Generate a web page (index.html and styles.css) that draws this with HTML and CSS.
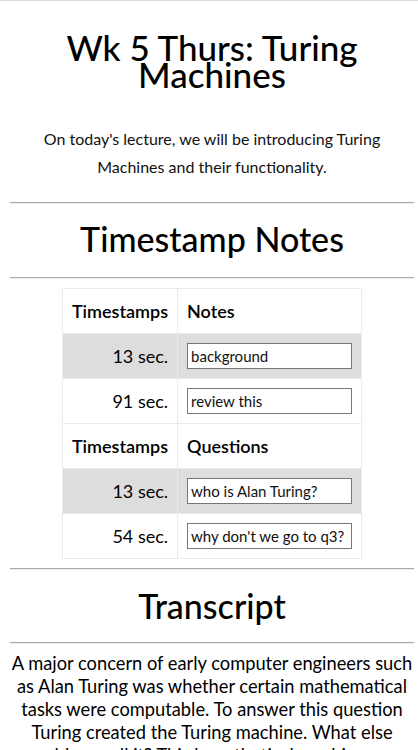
FILE: index.html
```html
<!DOCTYPE html>
<html>
<head>
<meta charset="utf-8">
<link rel="stylesheet" href="styles.css">
</head>
<body>
<div class="page">
  <h1 class="title">Wk 5 Thurs: Turing Machines</h1>
  <p class="intro">On today's lecture, we will be introducing Turing Machines and their functionality.</p>
  <hr class="rule rule-a">
  <h2 class="section section-a">Timestamp Notes</h2>
  <hr class="rule rule-b">
  <table class="notes">
    <tr class="head"><th class="ts">Timestamps</th><th>Notes</th></tr>
    <tr class="shade"><td class="ts">13 sec.</td><td><input class="field" type="text" value="background"></td></tr>
    <tr><td class="ts">91 sec.</td><td><input class="field" type="text" value="review this"></td></tr>
    <tr class="head"><th class="ts">Timestamps</th><th>Questions</th></tr>
    <tr class="shade"><td class="ts">13 sec.</td><td><input class="field" type="text" value="who is Alan Turing?"></td></tr>
    <tr><td class="ts">54 sec.</td><td><input class="field" type="text" value="why don't we go to q3?"></td></tr>
  </table>
  <hr class="rule rule-c">
  <h2 class="section section-b">Transcript</h2>
  <hr class="rule rule-d">
  <p class="transcript">A major concern of early computer engineers such as Alan Turing was whether certain mathematical tasks were computable. To answer this question Turing created the Turing machine. What else could we call it? This hypothetical machine can compute anything that is computable.</p>
</div>
</body>
</html>
```
FILE: styles.css
```css
html, body {
  margin: 0;
  padding: 0;
  background: #fff;
}
body {
  border-top: 1px solid #ddd;
  font-family: Lato, "Open Sans", sans-serif;
  color: #000;
  overflow: hidden;
}
.page {
  padding: 0 4px 0 10px;
}
.title {
  margin: 33px 0 0;
  font-size: 35px;
  font-weight: 500;
  line-height: 27px;
  text-align: center;
  padding: 0 50px;
}
.intro {
  margin: 37px 0 0;
  font-size: 16px;
  line-height: 28px;
  text-align: center;
  color: #111;
  padding: 0 20px;
}
.rule {
  border: 0;
  border-top: 1px solid #aaa;
  border-bottom: 1px solid #eee;
  height: 0;
  margin: 0;
}
.rule-a { margin-top: 21px; }
.rule-b { margin-top: 17px; }
.rule-c { margin-top: 9px; }
.rule-d { margin-top: 15px; }
.section {
  font-size: 34px;
  font-weight: 500;
  line-height: 42px;
  text-align: center;
  margin: 0;
}
.section-a { margin-top: 14px; }
.section-b { margin-top: 15px; }
.notes {
  margin: 9px auto 0;
  border-collapse: collapse;
  font-size: 18px;
}
.notes th, .notes td {
  border: 1px solid #eaeaea;
  height: 45px;
  padding: 0 9px;
  box-sizing: border-box;
}
.notes th {
  text-align: left;
  font-weight: 600;
}
.notes td.ts {
  text-align: right;
  padding-right: 9px;
  width: 102px;
}
.notes th.ts { text-align: left; }
.shade td { background: #ddd; }
.field {
  width: 165px;
  height: 26px;
  box-sizing: border-box;
  border: 1px solid #777;
  padding: 0 3px;
  font-family: Lato, sans-serif;
  font-size: 15px;
  color: #111;
  background: #fff;
  display: block;
}
.transcript {
  margin: 8px 0 0;
  font-size: 18.3px;
  line-height: 23px;
  text-align: center;
}
```
